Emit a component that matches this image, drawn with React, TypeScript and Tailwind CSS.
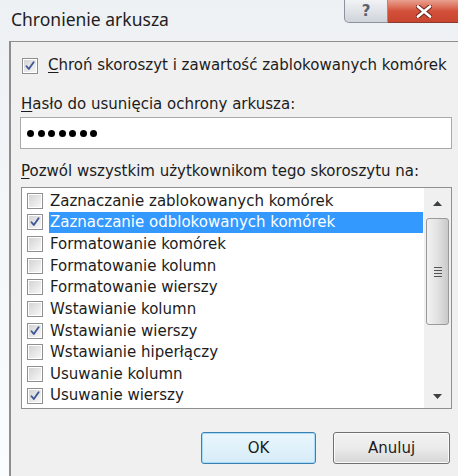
import React from "react";

interface Permission {
    label: string;
    checked: boolean;
    selected?: boolean;
}

const permissions: Permission[] = [
    { label: "Zaznaczanie zablokowanych komórek", checked: false },
    { label: "Zaznaczanie odblokowanych komórek", checked: true, selected: true },
    { label: "Formatowanie komórek", checked: false },
    { label: "Formatowanie kolumn", checked: false },
    { label: "Formatowanie wierszy", checked: false },
    { label: "Wstawianie kolumn", checked: false },
    { label: "Wstawianie wierszy", checked: true },
    { label: "Wstawianie hiperłączy", checked: false },
    { label: "Usuwanie kolumn", checked: false },
    { label: "Usuwanie wierszy", checked: true },
];

const uiFont = { fontFamily: '"DejaVu Sans", Verdana, sans-serif' };

function CheckBox({ checked }: { checked: boolean }) {
    return (
        <div className="w-[16px] h-[16px] shrink-0 border border-[#8f8f8f] bg-white p-[1px]">
            <div className="w-full h-full bg-gradient-to-br from-[#d4d4d4] to-[#f7f7f7] flex items-center justify-center">
                {checked && (
                    <svg width="10" height="10" viewBox="0 0 10 10">
                        <path
                            d="M1.5 5.2 L3.8 8 L8.6 1.2"
                            fill="none"
                            stroke="#3d5596"
                            strokeWidth="1.8"
                            strokeLinecap="round"
                            strokeLinejoin="round"
                        />
                    </svg>
                )}
            </div>
        </div>
    );
}

function ScrollBar() {
    return (
        <div className="w-[27px] h-full bg-[#f0f0f0] flex flex-col items-center">
            <div className="h-[30px] w-full flex items-center justify-center">
                <svg width="9" height="5" viewBox="0 0 9 5">
                    <path d="M0 5 L4.5 0 L9 5 Z" fill="#404040" />
                </svg>
            </div>
            <div className="w-[23px] h-[107px] rounded-[3px] border border-[#9a9a9a] bg-gradient-to-r from-[#f2f2f2] via-[#e2e2e2] to-[#c9c9c9] flex flex-col items-center justify-center gap-[2px]">
                <div className="w-[8px] h-[1px] bg-[#555]" />
                <div className="w-[8px] h-[1px] bg-[#555]" />
                <div className="w-[8px] h-[1px] bg-[#555]" />
                <div className="w-[8px] h-[1px] bg-[#555]" />
            </div>
            <div className="flex-1" />
            <div className="h-[24px] w-full flex items-center justify-center">
                <svg width="9" height="5" viewBox="0 0 9 5">
                    <path d="M0 0 L9 0 L4.5 5 Z" fill="#404040" />
                </svg>
            </div>
        </div>
    );
}

function CaptionButtons() {
    return (
        <div className="flex items-start">
            <div className="w-[44px] h-[23px] rounded-bl-[5px] border border-t-0 border-[#8c939c] bg-gradient-to-b from-[#f1f3f5] to-[#cfd4da] flex items-center justify-center">
                <span
                    className="text-[15px] font-bold text-[#5a6270] leading-none"
                    style={{ fontFamily: '"DejaVu Sans", sans-serif' }}
                >
                    ?
                </span>
            </div>
            <div className="w-[71px] h-[23px] border-b border-[#8b3a2c] bg-gradient-to-b from-[#e8a08f] via-[#d3503a] to-[#c8452f] flex items-center justify-center">
                <svg width="16" height="13" viewBox="0 0 16 13">
                    <path
                        d="M2 1.5 L14 11.5 M14 1.5 L2 11.5"
                        stroke="#6b2418"
                        strokeWidth="4.6"
                        strokeLinecap="round"
                    />
                    <path
                        d="M2 1.5 L14 11.5 M14 1.5 L2 11.5"
                        stroke="#ffffff"
                        strokeWidth="2.8"
                        strokeLinecap="round"
                    />
                </svg>
            </div>
        </div>
    );
}

export default function App() {
    return (
        <div className="w-[458px] h-[476px] overflow-hidden flex flex-col bg-gradient-to-b from-[#eef1f4] to-[#fbfcfd]">
            {/* title bar */}
            <div className="h-[41px] shrink-0 flex justify-between">
                <div
                    className="pl-[11px] pt-[6px] text-[17.5px] text-[#1e1e1e]"
                    style={{ fontFamily: '"Noto Sans", "Open Sans", sans-serif' }}
                >
                    Chronienie arkusza
                </div>
                <div className="mr-[-1px]">
                    <CaptionButtons />
                </div>
            </div>

            {/* dialog body */}
            <div
                className="flex-1 ml-[9px] border-l-2 border-t border-[#8e8e8e] bg-[#f0f0f0] pl-[10px] pr-[6px] flex flex-col text-[15px] text-[#1c1c1c]"
                style={uiFont}
            >
                <div className="mt-[15px] ml-[1px] h-[17px] flex items-center gap-[10px]">
                    <CheckBox checked />
                    <span className="whitespace-nowrap">
                        <span className="underline underline-offset-2">C</span>hroń skoroszyt i zawartość zablokowanych komórek
                    </span>
                </div>

                <div className="mt-[21px] h-[18px] leading-[18px] whitespace-nowrap">
                    <span className="underline underline-offset-2">H</span>asło do usunięcia ochrony arkusza:
                </div>

                <div className="mt-[4px] ml-[-1px] h-[32px] border border-[#a9a9a9] bg-white flex items-center pl-[6px] gap-[3.5px]">
                    {[0, 1, 2, 3, 4, 5, 6].map((i) => (
                        <div key={i} className="w-[7px] h-[7px] rounded-full bg-black" />
                    ))}
                </div>

                <div className="mt-[13px] h-[18px] leading-[18px] whitespace-nowrap">
                    <span className="underline underline-offset-2">P</span>ozwól wszystkim użytkownikom tego skoroszytu na:
                </div>

                <div className="mt-[7px] h-[222px] border border-[#8f8f8f] bg-white flex">
                    <div className="flex-1 pt-[2px] pl-[5px] pr-[1px]">
                        {permissions.map((p, index) => (
                            <div key={index} className="h-[21.67px] flex items-center gap-[6px]">
                                <CheckBox checked={p.checked} />
                                <div
                                    className={
                                        p.selected
                                            ? "flex-1 h-full flex items-center pl-[1px] bg-[#3399ff] text-white whitespace-nowrap"
                                            : "flex-1 h-full flex items-center pl-[1px] whitespace-nowrap"
                                    }
                                >
                                    {p.label}
                                </div>
                            </div>
                        ))}
                    </div>
                    <ScrollBar />
                </div>

                <div className="mt-[23px] mr-[2px] flex justify-end gap-[17px]">
                    <button className="w-[115px] h-[32px] rounded-[3px] border border-[#3c7fb1] bg-gradient-to-b from-[#eaf6fd] to-[#d6ecf8] shadow-[inset_0_0_0_1px_#a8dbf5] text-[15px] text-[#1c1c1c]">
                        OK
                    </button>
                    <button className="w-[117px] h-[32px] rounded-[3px] border border-[#707070] bg-gradient-to-b from-[#f2f2f2] via-[#ebebeb] to-[#d6d6d6] shadow-[inset_0_0_0_1px_#fbfbfb] text-[15px] text-[#1c1c1c]">
                        Anuluj
                    </button>
                </div>
            </div>
        </div>
    );
}
